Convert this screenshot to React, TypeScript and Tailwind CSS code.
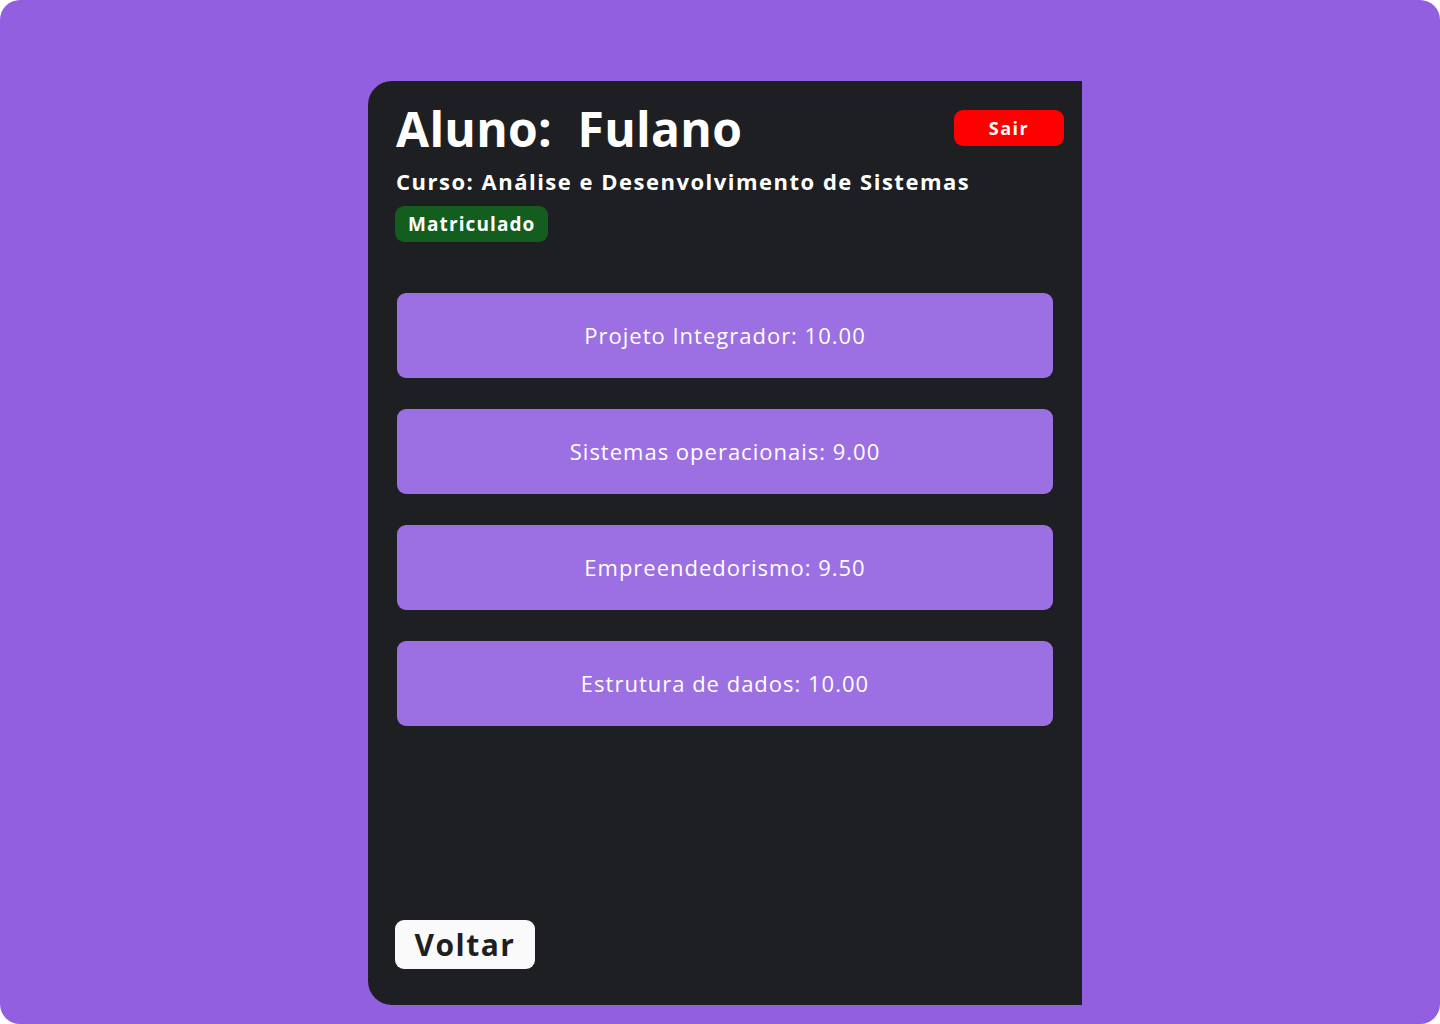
import React from "react";

const grades = [
  "Projeto Integrador: 10.00",
  "Sistemas operacionais: 9.00",
  "Empreendedorismo: 9.50",
  "Estrutura de dados: 10.00",
];

export default function App() {
  return (
    <div className="w-[1440px] h-[1024px] bg-white" style={{ fontFamily: '"Open Sans", "Noto Sans", sans-serif' }}>
      <div className="w-full h-full rounded-[20px] bg-[#915fe0] pt-[81px] pl-[368px]">
        <div className="w-[714px] h-[924px] bg-[#1e1f22] rounded-l-[24px] flex flex-col pl-[28px] pr-[18px]">
          <div className="flex justify-between items-start pt-[18px]">
            <h1 className="text-white font-bold text-[48px] leading-[60px] tracking-[0.3px]">Aluno:&nbsp; Fulano</h1>
            <button className="mt-[11px] w-[110px] h-[36px] rounded-[9px] bg-[#ff0000] text-white font-bold text-[18px] tracking-[1.5px]">Sair</button>
          </div>
          <div className="text-white font-bold text-[22px] leading-[30px] mt-[7px] tracking-[1.5px]">Curso: Análise e Desenvolvimento de Sistemas</div>
          <div className="mt-[10px] -ml-[1px]">
            <span className="inline-flex items-center h-[36px] px-[13px] rounded-[9px] bg-[#135e1e] text-white font-bold text-[19px] tracking-[1.1px]">Matriculado</span>
          </div>
          <div className="flex flex-col gap-[31px] mt-[51px] pl-[1px] pr-[11px]">
            {grades.map((g) => (
              <div key={g} className="h-[85px] rounded-[9px] bg-[#9c70e3] flex items-center justify-center text-white font-normal text-[22px] tracking-[1px]">
                {g}
              </div>
            ))}
          </div>
          <div className="mt-auto mb-[36px] -ml-[1px]">
            <button className="w-[140px] h-[49px] rounded-[9px] bg-[#fafafa] text-[#1e1f22] font-bold text-[30px] leading-none tracking-[1.5px]">Voltar</button>
          </div>
        </div>
      </div>
    </div>
  );
}
